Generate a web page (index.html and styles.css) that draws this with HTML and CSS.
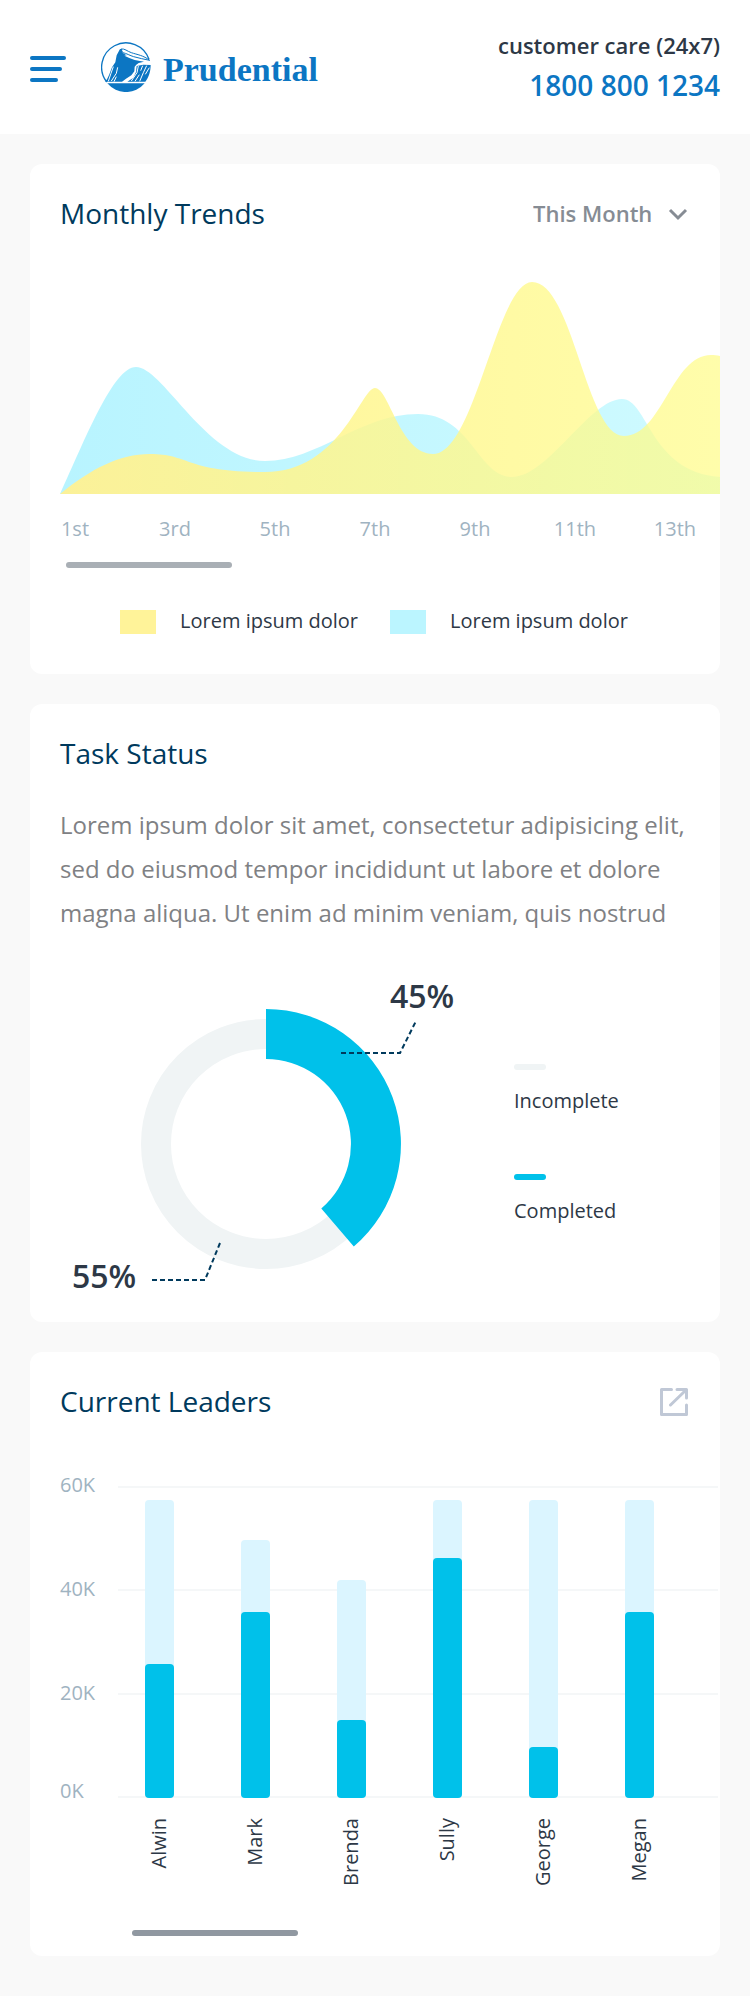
FILE: index.html
```html
<!DOCTYPE html>
<html lang="en">
<head>
<meta charset="utf-8">
<meta name="viewport" content="width=device-width, initial-scale=1">
<title>Prudential dashboard</title>
<link rel="stylesheet" href="styles.css">
</head>
<body>
<header class="topbar">
  <div class="brand">
    <button class="menu" type="button" aria-label="Menu"><span class="menu-line"></span><span class="menu-line menu-line-mid"></span><span class="menu-line menu-line-short"></span></button>
    <a class="logo" href="#">
      <svg class="logo-mark" viewBox="33 36 150 150" aria-hidden="true">
        <path d="M50 156A73 73 0 1 1 177 88" fill="none" stroke="#0c76c3" stroke-width="4"/>
        <path d="M93 57C104 55 112 64 124 68C142 74 160 76 179 91C163 88 146 84 131 80C120 77 110 70 98 68Z" fill="#fff" stroke="#0c76c3" stroke-width="3"/>
        <path d="M90 57L95 57L97 68L110 76L103 77L118 84L134 90L162 95L146 99L139 104L134 110L133 124L124 136L108 146L96 155H46C56 142 60 127 66 112L76 97L80 76Z" fill="#0c76c3"/>
        <path d="M140 108L160 104L182 105C182 124 176 143 166 155H112L130 143L138 126Z" fill="#0c76c3"/>
        <path d="M70 110L63 130L55 154M83 112L79 130L64 153M79 140L72 155M145 108L141 128L124 153M158 107L152 122M148 134L135 154M170 107L160 128L149 154M178 113L166 133" fill="none" stroke="#fff" stroke-width="3"/>
        <path d="M52 160H164A73 73 0 0 1 52 160Z" fill="#0c76c3"/>
      </svg>
      <span class="logo-name">Prudential</span>
    </a>
  </div>
  <div class="care">
    <span class="care-label">customer care (24x7)</span>
    <a class="care-phone" href="tel:18008001234">1800 800 1234</a>
  </div>
</header>

<main class="cards">
  <section class="card trends">
    <div class="card-head">
      <h2 class="card-title">Monthly Trends</h2>
      <div class="period">
        <select class="period-select" aria-label="Period"><option>This Month</option></select>
        <svg class="period-arrow" viewBox="0 0 22 14" aria-hidden="true"><path d="M3 3L11 11L19 3" fill="none" stroke="#868c94" stroke-width="3"/></svg>
      </div>
    </div>
    <svg class="area-chart" viewBox="60 282 660 212" role="img" aria-label="Monthly trends">
      <defs>
        <linearGradient id="cyan"><stop offset="0" stop-color="#b8f4ff"/><stop offset="1" stop-color="#cffaff"/></linearGradient>
        <linearGradient id="yellow"><stop offset="0" stop-color="#fff193" stop-opacity=".95"/><stop offset="1" stop-color="#fffc86" stop-opacity=".7"/></linearGradient>
      </defs>
      <path fill="url(#cyan)" d="M60 494C85 440 113 367 136 367C163 367 207 461 265 461C318 461 360 414 418 414C471 414 478 477 512 477C548 477 590 399 622 399C648 399 650 472 720 477V494Z"/>
      <path fill="url(#yellow)" d="M60 494C91 469 119 454 150 454C190 454 185 472 265 472C340 472 361 388 375 388C389 388 400 454 433 454C475 454 497 282 532 282C573 282 586 436 624 436C662 436 672 355 711 355C714 355 717 355 720 356V494Z"/>
    </svg>
    <ol class="days">
      <li>1st</li><li>3rd</li><li>5th</li><li>7th</li><li>9th</li><li>11th</li><li>13th</li>
    </ol>
    <div class="scroll-thumb trends-thumb"></div>
    <ul class="legend">
      <li class="legend-item"><span class="swatch swatch-yellow"></span>Lorem ipsum dolor</li>
      <li class="legend-item"><span class="swatch swatch-cyan"></span>Lorem ipsum dolor</li>
    </ul>
  </section>

  <section class="card tasks">
    <div class="card-head"><h2 class="card-title">Task Status</h2></div>
    <p class="intro">Lorem ipsum dolor sit amet, consectetur adipisicing elit, sed do eiusmod tempor incididunt ut labore et dolore magna aliqua. Ut enim ad minim veniam, quis nostrud</p>
    <div class="task-body">
      <svg class="donut" viewBox="60 965 400 337" role="img" aria-label="45% completed, 55% incomplete">
        <circle cx="266" cy="1144" r="110" fill="none" stroke="#f0f4f5" stroke-width="30"/>
        <path d="M266 1009A135 135 0 0 1 353.8 1246.5L321.3 1208.5A85 85 0 0 0 266 1059Z" fill="#00c1ea"/>
        <path class="callout" d="M341 1053H400L416 1021M152 1280H205L220 1243"/>
        <text class="percent" x="390" y="1008">45%</text>
        <text class="percent" x="72" y="1288">55%</text>
      </svg>
      <ul class="task-legend">
        <li class="task-key"><span class="dash"></span>Incomplete</li>
        <li class="task-key"><span class="dash dash-done"></span>Completed</li>
      </ul>
    </div>
  </section>

  <section class="card leaders">
    <div class="card-head">
      <h2 class="card-title">Current Leaders</h2>
      <button class="open" type="button" aria-label="Open leaders">
        <svg class="open-icon" viewBox="0 0 28 28" aria-hidden="true"><path d="M11.5 1.5H1.5V26.5H26.5V17M17 1.5H26.5V10M26 2L10.5 17" fill="none" stroke="#c0c8d6" stroke-width="3" stroke-linecap="round" stroke-linejoin="round"/></svg>
      </button>
    </div>
    <div class="bar-chart">
      <div class="scale"><span>60K</span><span>40K</span><span>20K</span><span>0K</span></div>
      <div class="plot">
        <div class="lines"><span class="line"></span><span class="line"></span><span class="line"></span><span class="line"></span></div>
        <div class="bars">
          <div class="bar" style="height:95.6%"><div class="fill" style="height:45%"></div></div>
          <div class="bar" style="height:82.8%"><div class="fill" style="height:72%"></div></div>
          <div class="bar" style="height:70%"><div class="fill" style="height:35.5%"></div></div>
          <div class="bar" style="height:95.6%"><div class="fill" style="height:80.4%"></div></div>
          <div class="bar" style="height:95.6%"><div class="fill" style="height:17.2%"></div></div>
          <div class="bar" style="height:95.6%"><div class="fill" style="height:62.3%"></div></div>
        </div>
        <div class="names">
          <span class="name">Alwin</span><span class="name">Mark</span><span class="name">Brenda</span><span class="name">Sully</span><span class="name">George</span><span class="name">Megan</span>
        </div>
      </div>
    </div>
    <div class="scroll-thumb leaders-thumb"></div>
  </section>
</main>
</body>
</html>
```

FILE: styles.css
```css
* { box-sizing: border-box; }
body {
  margin: 0;
  background: #f9f9f9;
  color: #2d3846;
  font-family: "Open Sans", "Noto Sans", sans-serif;
  font-size: 20px;
  line-height: 27px;
}
ul, ol { list-style: none; margin: 0; padding: 0; }
button { border: 0; background: none; cursor: pointer; }

.topbar {
  display: flex;
  justify-content: space-between;
  align-items: center;
  padding: 30px;
  background: #fff;
}
.brand { display: flex; align-items: center; gap: 35px; }
.menu { display: flex; flex-direction: column; gap: 7px; width: 36px; padding: 4px 0 0; }
.menu-line { width: 36px; height: 4px; border-radius: 2px; background: #0c76c3; }
.menu-line-mid { width: 32px; }
.menu-line-short { width: 28px; }
.logo { display: flex; align-items: center; gap: 12px; color: #0c76c3; text-decoration: none; }
.logo-mark { width: 50px; height: 50px; }
.logo-name { font: bold 34px/50px "Liberation Serif", serif; padding-top: 6px; }
.care { display: flex; flex-direction: column; gap: 6px; text-align: right; font-weight: 600; }
.care-label { font-size: 22px; line-height: 30px; }
.care-phone { font-size: 28px; line-height: 38px; color: #0c76c3; text-decoration: none; }

.cards { display: flex; flex-direction: column; gap: 30px; padding: 30px 30px 40px; }
.card { background: #fff; border-radius: 12px; overflow: hidden; }
.card-head { display: flex; justify-content: space-between; align-items: center; padding: 30px 30px 0; }
.card-title { margin: 0; font-size: 28px; line-height: 38px; font-weight: 400; color: #003a5d; }
.scroll-thumb { width: 166px; height: 6px; border-radius: 3px; }

.period { position: relative; }
.period-select {
  appearance: none;
  display: block;
  border: 0;
  padding: 0 37px 0 0;
  background: none;
  font: 600 22px/30px "Open Sans", "Noto Sans", sans-serif;
  color: #868c94;
}
.period-arrow { position: absolute; right: 1px; top: 9px; width: 22px; height: 14px; pointer-events: none; }
.area-chart { display: block; width: calc(100% - 30px); margin: 50px 0 21px 30px; }
.days { display: grid; grid-template-columns: repeat(7, 1fr); margin: 0 -5px 20px; text-align: center; color: #9fb3c1; }
.trends-thumb { margin-left: 36px; background: #a9afb5; }
.legend { display: flex; justify-content: center; gap: 32px; padding: 39px 2px 40px 0; }
.legend-item { display: flex; align-items: flex-end; gap: 24px; }
.swatch { width: 36px; height: 24px; }
.swatch-yellow { background: #fff399; }
.swatch-cyan { background: #bbf5ff; }

.intro { margin: 31px 30px 30px; font-size: 24px; line-height: 44px; color: #7f8184; }
.task-body { display: flex; align-items: flex-start; gap: 54px; padding: 0 30px 20px; }
.donut { flex: 0 1 400px; min-width: 0; }
.callout { fill: none; stroke: #003a5d; stroke-width: 2; stroke-dasharray: 5 3; }
.percent { font-size: 32px; font-weight: 600; fill: #2d3846; }
.task-legend { display: flex; flex-direction: column; gap: 60px; padding-top: 99px; }
.task-key { display: flex; flex-direction: column; gap: 17px; }
.dash { width: 32px; height: 6px; border-radius: 3px; background: #f0f4f5; }
.dash-done { background: #00c1ea; }

.open { padding: 2px 2px 0; }
.open-icon { display: block; width: 28px; height: 28px; }
.bar-chart { display: grid; grid-template-columns: 58px 1fr; margin: 51px 2px 42px 30px; }
.scale { display: grid; grid-template-rows: 104px 104px 98px 27px; align-content: start; color: #9fb3c1; }
.plot { position: relative; padding-top: 15px; }
.lines { position: absolute; top: 15px; left: 0; right: 0; height: 312px; display: flex; flex-direction: column; justify-content: space-between; }
.line { height: 2px; background: #f5f7f8; }
.bars, .names { position: relative; display: flex; gap: 67px; padding-left: 27px; }
.bars { height: 312px; align-items: flex-end; }
.bar { width: 29px; display: flex; align-items: flex-end; border-radius: 4px; background: #dbf5ff; }
.fill { width: 100%; border-radius: 4px; background: #00c1ea; }
.names { padding-top: 20px; height: 90px; align-items: flex-start; }
.name { width: 29px; line-height: 27px; writing-mode: vertical-rl; transform: rotate(180deg); }
.leaders-thumb { margin: 0 0 20px 102px; background: #9098a1; }
```
